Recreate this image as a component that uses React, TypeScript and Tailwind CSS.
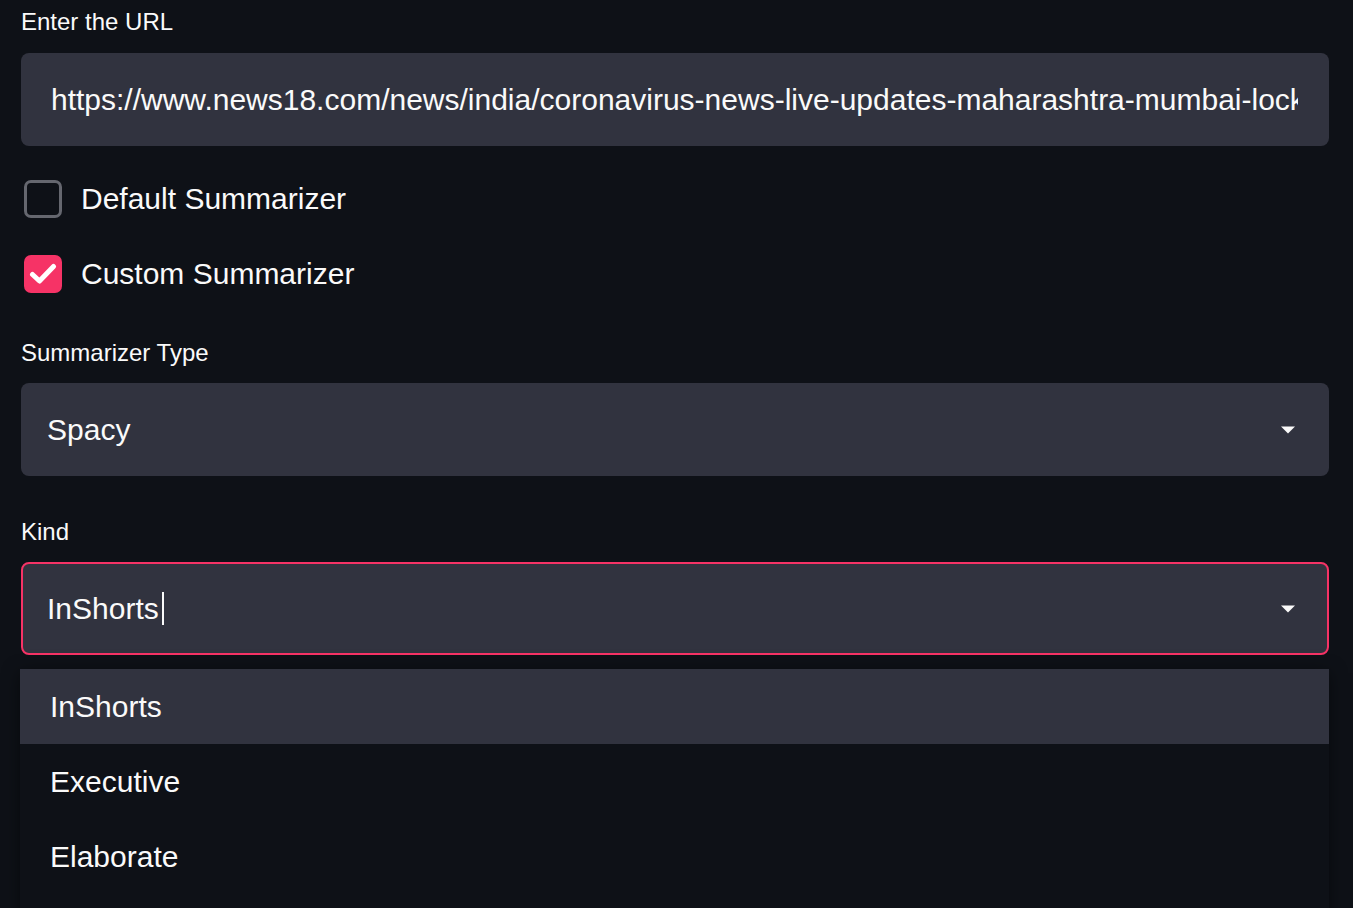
import React from "react";

const font = { fontFamily: '"Liberation Sans", Arial, sans-serif' };

function Caret() {
    return (
        <svg width="14" height="8" viewBox="0 0 14 8" className="shrink-0">
            <path d="M0 0.5 L14 0.5 L7 7.5 Z" fill="#fafafa" />
        </svg>
    );
}

function Label({ children }: { children: React.ReactNode }) {
    return <div className="text-[24px] leading-[29px] text-[#fafafa] mb-[16px]">{children}</div>;
}

function Checkbox({ checked, label }: { checked: boolean; label: string }) {
    return (
        <div className="flex items-center h-[38px] pl-[3px]">
            {checked ? (
                <div className="w-[38px] h-[38px] rounded-[7px] bg-[#f63366] flex items-center justify-center">
                    <svg width="28" height="22" viewBox="0 0 28 22">
                        <path d="M3.5 11.5 L10.5 18 L24.5 3.5" fill="none" stroke="#ffffff" strokeWidth="5" strokeLinecap="round" strokeLinejoin="round" />
                    </svg>
                </div>
            ) : (
                <div className="w-[38px] h-[38px] rounded-[7px] border-[3px] border-[#65676f] bg-[#0e1117]" />
            )}
            <span className="ml-[19px] text-[30px] leading-[36px] text-[#fafafa]">{label}</span>
        </div>
    );
}

export default function App() {
    const options = ["InShorts", "Executive", "Elaborate"];

    return (
        <div className="min-h-screen h-[908px] w-full bg-[#0e1117] overflow-hidden" style={font}>
            <div className="pl-[21px] pr-[24px] pt-[7px]">
                {/* URL input */}
                <div className="text-[24px] leading-[29px] text-[#fafafa] mb-[17px]">Enter the URL</div>
                <div className="h-[93px] rounded-[8px] bg-[#31333f] pl-[30px] pr-[31px] flex items-center overflow-hidden">
                    <div className="overflow-hidden">
                        <span className="block text-[30px] text-[#fafafa] whitespace-nowrap">
                            https://www.news18.com/news/india/coronavirus-news-live-updates-maharashtra-mumbai-lockdown
                        </span>
                    </div>
                </div>

                {/* Summarizer options */}
                <div className="mt-[34px] flex flex-col gap-[37px]">
                    <Checkbox checked={false} label="Default Summarizer" />
                    <Checkbox checked={true} label="Custom Summarizer" />
                </div>

                <div className="mt-[45px]">
                    <Label>Summarizer Type</Label>
                    <div className="h-[93px] rounded-[8px] bg-[#31333f] pl-[26px] pr-[34px] flex items-center justify-between">
                        <span className="text-[30px] text-[#fafafa]">Spacy</span>
                        <Caret />
                    </div>
                </div>

                <div className="mt-[41px]">
                    <Label>Kind</Label>
                    <div className="h-[93px] rounded-[8px] bg-[#31333f] border-2 border-[#f63366] pl-[24px] pr-[32px] flex items-center justify-between">
                        <div className="flex items-center">
                            <span className="text-[30px] text-[#fafafa]">InShorts</span>
                            <span className="ml-[3px] w-[2px] h-[33px] bg-[#fafafa]" />
                        </div>
                        <Caret />
                    </div>
                </div>

                {/* Dropdown menu */}
                <div className="mt-[14px] -ml-[1px] bg-[#0e1117] shadow-[0_4px_16px_rgba(0,0,0,0.5)]">
                    {options.map((opt, i) => (
                        <div
                            key={opt}
                            className={
                                "h-[75px] pl-[30px] flex items-center text-[30px] text-[#fafafa] " +
                                (i === 0 ? "bg-[#31333f]" : "")
                            }
                        >
                            {opt}
                        </div>
                    ))}
                    <div className="h-[20px]" />
                </div>
            </div>
        </div>
    );
}
